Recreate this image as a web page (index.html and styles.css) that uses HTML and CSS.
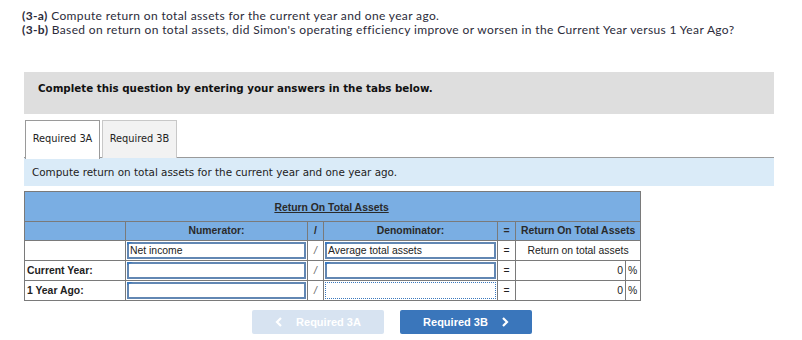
FILE: index.html
```html
<!DOCTYPE html>
<html lang="en">
<head>
    <meta charset="UTF-8">
    <title>Return on total assets</title>
    <link rel="stylesheet" href="styles.css">
</head>
<body>

    <div class="question">
        <p><b>(3-a)</b> Compute return on total assets for the current year and one year ago.</p>
        <p><b>(3-b)</b> Based on return on total assets, did Simon's operating efficiency improve or worsen in the Current Year versus 1 Year Ago?</p>
    </div>

    <div class="answer-area">
        <div class="notice">Complete this question by entering your answers in the tabs below.</div>

        <div class="tabs">
            <div class="tab active">Required 3A</div>
            <div class="tab">Required 3B</div>
        </div>

        <div class="instructions">Compute return on total assets for the current year and one year ago.</div>

        <table class="ratio-table">
            <colgroup>
                <col class="c-label">
                <col class="c-num">
                <col class="c-op">
                <col class="c-den">
                <col class="c-eq">
                <col class="c-res">
                <col class="c-pct">
            </colgroup>
            <tr class="title-row">
                <th colspan="7"><span>Return On Total Assets</span></th>
            </tr>
            <tr class="head-row">
                <th></th>
                <th>Numerator:</th>
                <th>/</th>
                <th>Denominator:</th>
                <th>=</th>
                <th colspan="2">Return On Total Assets</th>
            </tr>
            <tr>
                <td></td>
                <td class="cell-input"><div class="field">Net income</div></td>
                <td class="op">/</td>
                <td class="cell-input"><div class="field">Average total assets</div></td>
                <td class="eq">=</td>
                <td colspan="2" class="center">Return on total assets</td>
            </tr>
            <tr>
                <td class="label">Current Year:</td>
                <td class="cell-input"><div class="field"></div></td>
                <td class="op">/</td>
                <td class="cell-input"><div class="field"></div></td>
                <td class="eq">=</td>
                <td class="num">0</td>
                <td class="pct">%</td>
            </tr>
            <tr>
                <td class="label">1 Year Ago:</td>
                <td class="cell-input"><div class="field"></div></td>
                <td class="op">/</td>
                <td class="cell-input"><div class="field dotted"></div></td>
                <td class="eq">=</td>
                <td class="num">0</td>
                <td class="pct">%</td>
            </tr>
        </table>

        <div class="nav-buttons">
            <div class="nav-btn disabled">
                <svg class="chev" width="8" height="10" viewBox="0 0 8 10"><path d="M6 1 L2 5 L6 9" fill="none" stroke="#fff" stroke-width="2.2"/></svg>
                Required 3A
            </div>
            <div class="nav-btn">
                Required 3B
                <svg class="chev" width="8" height="10" viewBox="0 0 8 10"><path d="M2 1 L6 5 L2 9" fill="none" stroke="#fff" stroke-width="2.2"/></svg>
            </div>
        </div>
    </div>

</body>
</html>
```

FILE: styles.css
```css
* {
    margin: 0;
    padding: 0;
    box-sizing: border-box;
}

body {
    font-family: "Open Sans", sans-serif;
    color: #333;
    background: #fff;
}

.question {
    padding: 9px 0 0 22px;
    font-family: Lato, "Open Sans", sans-serif;
    font-size: 12px;
    line-height: 14.4px;
    letter-spacing: 0.36px;
    color: #2b2b3a;
}

.question b {
    font-weight: 700;
}

.answer-area {
    width: 750px;
    margin: 34px 0 0 24px;
}

.notice {
    height: 42px;
    background: #dedede;
    padding: 10px 0 0 14px;
    font-family: "DejaVu Sans", Verdana, sans-serif;
    font-size: 10.3px;
    font-weight: 700;
    color: #111;
}

.tabs {
    display: flex;
    gap: 2px;
    margin-top: 6px;
    padding-left: 1px;
    border-bottom: 1px solid #9a9a9a;
    height: 38px;
}

.tab {
    width: 75px;
    height: 38px;
    padding-top: 12px;
    text-align: center;
    font-family: "DejaVu Sans", Verdana, sans-serif;
    font-size: 9.8px;
    color: #222;
    background: #f2f2f2;
    border: 1px solid #c8c8c8;
    border-bottom: none;
}

.tab.active {
    background: #fff;
    border-color: #9a9a9a;
    height: 39px;
}

.instructions {
    height: 28px;
    background: #daebf8;
    padding: 8px 0 0 8px;
    font-family: "DejaVu Sans", Verdana, sans-serif;
    font-size: 10.4px;
    color: #222;
}

.ratio-table {
    margin-top: 5px;
    border-collapse: collapse;
    width: 616px;
    table-layout: fixed;
    font-family: "Liberation Sans", Arial, sans-serif;
    font-size: 10.4px;
    color: #222;
}

.c-label { width: 101px; }
.c-num { width: 182px; }
.c-op { width: 16px; }
.c-den { width: 174px; }
.c-eq { width: 18px; }
.c-res { width: 110px; }
.c-pct { width: 15px; }

.ratio-table th,
.ratio-table td {
    border: 1px solid #7a7a7a;
    height: 19px;
    padding: 0 2px;
}

.ratio-table th {
    background: #7aaee3;
    font-weight: 700;
    color: #2a2a2a;
    text-align: center;
}

.title-row th {
    height: 30px;
    padding-top: 3px;
}

.title-row span {
    text-decoration: underline;
    position: relative;
    left: -1px;
}

.ratio-table td.label {
    font-weight: 700;
}

.ratio-table td.op {
    text-align: center;
    color: #666;
    font-style: italic;
}

.ratio-table td.eq {
    text-align: center;
    color: #222;
}

.ratio-table td.center {
    text-align: center;
}

.ratio-table td.num {
    text-align: right;
    padding-right: 2px;
}

.ratio-table td.pct {
    padding-left: 2px;
}

.ratio-table td.cell-input {
    padding: 1px;
}

.field {
    position: relative;
    height: 17px;
    border: 2px solid #6287b3;
    background: #fff;
    padding: 1px 0 0 1px;
    line-height: 12px;
}

.field::before {
    content: "";
    position: absolute;
    top: -2px;
    left: -2px;
    border-top: 3px solid #3a78bd;
    border-right: 6px solid transparent;
}

.field.dotted {
    border: 1px dotted #3a78bd;
}

.field.dotted::before {
    display: none;
}

.nav-buttons {
    display: flex;
    justify-content: center;
    gap: 16px;
    margin-top: 9px;
    padding-right: 14px;
}

.nav-btn {
    display: flex;
    align-items: center;
    justify-content: center;
    gap: 13px;
    width: 132px;
    height: 24px;
    background: #3a76bb;
    border-radius: 2px;
    color: #fff;
    font-family: "Liberation Sans", Arial, sans-serif;
    font-size: 11px;
    font-weight: 700;
}

.nav-btn.disabled {
    background: #d7e3f1;
}

.chev {
    display: block;
}
```
